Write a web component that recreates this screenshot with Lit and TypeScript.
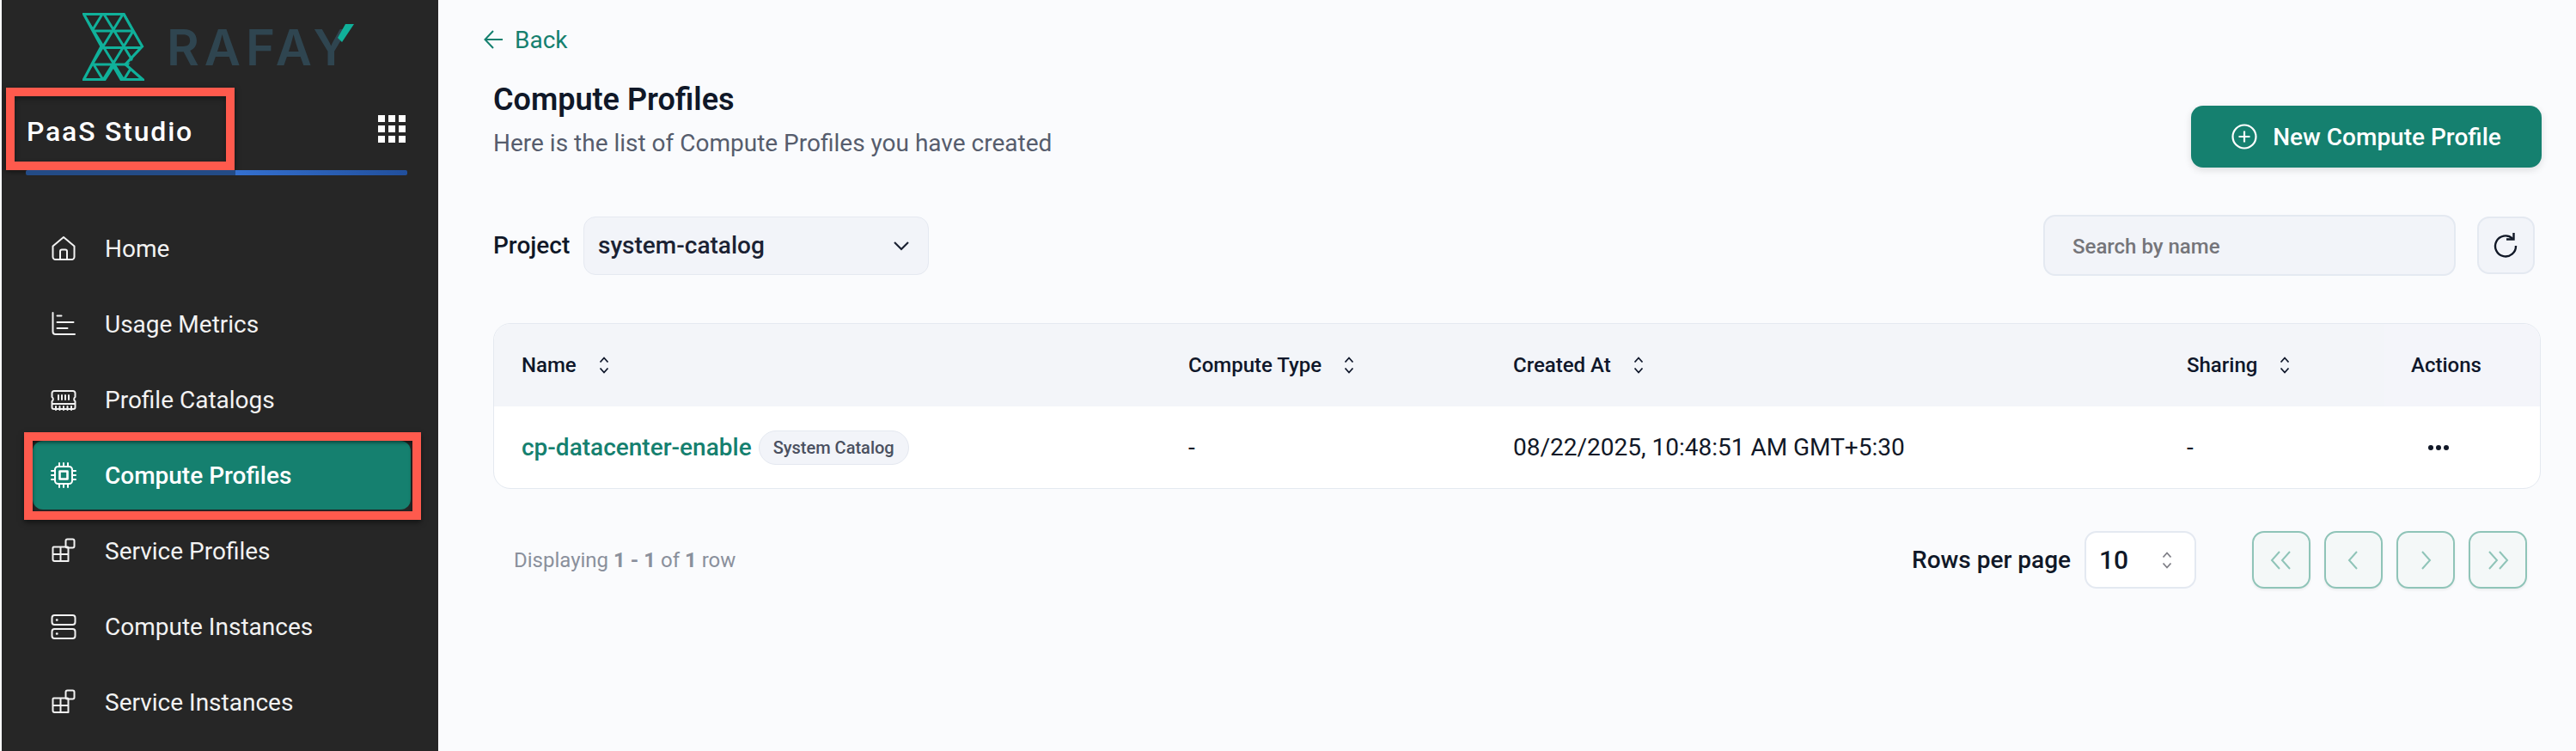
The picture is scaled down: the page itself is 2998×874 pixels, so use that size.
import { LitElement, html, css, svg } from "lit";
import { customElement } from "lit/decorators.js";

const S = 30;
const icons: Record<string, unknown> = {
  home: svg`<path d="M2.500 12.500 15 2l12.500 10.500V25a3 3 0 0 1-3 3h-19a3 3 0 0 1-3-3z"/><path d="M11 28V18.500a2 2 0 0 1 2-2h4a2 2 0 0 1 2 2V28"/>`,
  usage: svg`<path d="M2.500 2v22a3 3 0 0 0 3 3h22.500M7.500 5.500h5M7.500 13h19M7.500 20h12"/>`,
  ram: svg`<path d="M4 5h22a2.500 2.500 0 0 1 2.500 2.500v4.500a3 3 0 0 0 0 5v7a2 2 0 0 1-2 2h-23a2 2 0 0 1-2-2v-7a3 3 0 0 0 0-5V7.500A2.500 2.500 0 0 1 4 5z"/><path d="M9 10v5M13 10v5M17 10v5M21 10v5M2 20h26M6 23v4M10.500 23v4M15 23v4M19.500 23v4M24 23v4"/>`,
  chip: svg`<rect x="5" y="5" width="20" height="20" rx="3.500"/><rect x="10.500" y="10.500" width="9" height="9" stroke-width="2.600"/><path d="M10 1v4M15 1v4M20 1v4M10 25v4M15 25v4M20 25v4M1 10h4M1 15h4M1 20h4M25 10h4M25 15h4M25 20h4"/>`,
  service: svg`<path d="M3.500 10.500h16a1 1 0 0 1 1 1V27h-16a2 2 0 0 1-2-2V11.500a1 1 0 0 1 1-1zM2.500 19h18M11.500 11v16"/><rect x="17.500" y="1.500" width="10" height="10" rx="2"/>`,
  server: svg`<rect x="1.500" y="2" width="27" height="11" rx="3"/><rect x="1.500" y="18" width="27" height="11" rx="3"/><path d="M7 7.500h.5M7 23.500h.5" stroke-width="2.400"/>`,
};

const nav: [string, string][] = [
  ["home", "Home"],
  ["usage", "Usage Metrics"],
  ["ram", "Profile Catalogs"],
  ["chip", "Compute Profiles"],
  ["service", "Service Profiles"],
  ["server", "Compute Instances"],
  ["service", "Service Instances"],
];

const LW = 24;
const latticeLines = (() => {
  const d: string[] = [];
  for (let i = 0; i < 5; i++) {
    const y = i * 19.500 + 1.500;
    d.push(`M0 ${y}H72`);
  }
  for (let k = -4; k < 8; k++) {
    const x = k * LW;
    d.push(`M${x} 0l48 78`);
    d.push(`M${x + 48} 0l-48 78`);
  }
  return d.join("");
})();

const sort = svg`<svg class="sort" viewBox="0 0 12 20" fill="none" stroke="currentColor" stroke-width="1.800"><path d="M1.500 6.500 6 1.500l4.500 5M1.500 13.500 6 18.500l4.500-5"/></svg>`;

@customElement("app-root")
export class AppRoot extends LitElement {
  static styles = css`
    :host {
      display: flex;
      width: 2998px;
      height: 874px;
      overflow: hidden;
      background: #fafbfd;
      font-family: Roboto, "Liberation Sans", sans-serif;
      color: #111827;
      padding-left: 2px;
      box-sizing: border-box;
    }
    .side {
      width: 508px;
      flex: none;
      background: #262626;
      display: flex;
      flex-direction: column;
      box-sizing: border-box;
    }
    .logo {
      display: flex;
      align-items: center;
      height: 102px;
      padding: 7px 0 0 94px;
      box-sizing: border-box;
    }
    .mark { width: 72px; height: 79px; }
    .word {
      position: relative;
      margin-left: 26px;
      font: 600 58px/60px Inter, "Liberation Sans", sans-serif;
      color: #2f4550;
      letter-spacing: 6px;
      height: 60px;
    }
    .tick { position: absolute; left: 198px; top: 2px; width: 20px; height: 22px; }
    .prod {
      display: flex;
      align-items: center;
      justify-content: space-between;
      padding: 0 38px 0 5px;
    }
    .box {
      border: 10px solid #ff5a4d;
      width: 266px;
      height: 96px;
      box-sizing: border-box;
      display: flex;
      align-items: center;
      padding: 6px 0 0 14px;
      font-size: 32px;
      font-weight: 500;
      color: #fff;
      letter-spacing: 1.800px;
      box-shadow: 0 2px 6px rgba(0, 0, 0, 0.5), inset 0 3px 6px rgba(0, 0, 0, 0.35);
      white-space: nowrap;
    }
    .grid {
      display: grid;
      grid-template-columns: repeat(3, 8px);
      grid-auto-rows: 8px;
      gap: 4px;
    }
    .grid i { background: #fff; }
    .rule {
      height: 6px;
      margin: 0 36px 0 28px;
      border-radius: 2px;
      background: linear-gradient(90deg, #234b86 0 55%, #3470d0 55%, #214f9c 100%);
    }
    .nav {
      display: flex;
      flex-direction: column;
      gap: 8px;
      margin: 45px 32px 0 36px;
    }
    .item {
      position: relative;
      height: 80px;
      display: flex;
      align-items: center;
      gap: 33px;
      padding-left: 21px;
      border-radius: 12px;
      color: #f2f2f2;
      font-size: 28px;
      white-space: nowrap;
    }
    .item svg {
      width: ${S}px;
      height: ${S}px;
      flex: none;
      fill: none;
      stroke: currentColor;
      stroke-width: 2;
      stroke-linecap: round;
      stroke-linejoin: round;
    }
    .item.on {
      background: #15806f;
      color: #fff;
      font-weight: 500;
    }
    .item.on::after {
      content: "";
      position: absolute;
      inset: -10px -12px -12px -10px;
      border: 10px solid #ff5a4d;
      box-shadow: 0 3px 6px rgba(0, 0, 0, 0.5), inset 0 2px 4px rgba(0, 0, 0, 0.5);
    }
    .main {
      flex: 1;
      min-width: 0;
      padding: 26px 40px 0 64px;
      box-sizing: border-box;
    }
    .back {
      display: flex;
      align-items: center;
      gap: 12px;
      height: 40px;
      margin-left: -11px;
      color: #15806f;
      font-size: 28px;
    }
    .back svg { width: 24px; height: 24px; }
    .head {
      display: flex;
      justify-content: space-between;
      margin-top: 28px;
    }
    h1 {
      margin: 0;
      font-size: 36px;
      line-height: 44px;
      font-weight: 600;
      color: #101828;
    }
    .sub {
      margin-top: 9px;
      font-size: 28px;
      line-height: 40px;
      color: #565d6d;
    }
    .cta {
      margin-top: 29px;
      width: 408px;
      height: 72px;
      border-radius: 14px;
      background: #15806f;
      color: #fff;
      display: flex;
      align-items: center;
      justify-content: center;
      gap: 18px;
      font-size: 28px;
      font-weight: 500;
      box-shadow: 0 3px 8px rgba(0, 0, 0, 0.12);
    }
    .cta svg { width: 30px; height: 30px; }
    .tools {
      display: flex;
      align-items: center;
      margin-top: 55px;
      padding-right: 8px;
    }
    .tools label {
      font-size: 28px;
      font-weight: 500;
      width: 105px;
      color: #101828;
    }
    .sel {
      width: 402px;
      height: 68px;
      box-sizing: border-box;
      background: #f2f4f9;
      border: 1px solid #e5e9f1;
      border-radius: 14px;
      display: flex;
      align-items: center;
      justify-content: space-between;
      padding: 0 21px 0 16px;
      font-size: 28px;
      font-weight: 500;
      color: #1b2233;
    }
    .sel svg { width: 20px; height: 12px; }
    .search {
      margin-left: auto;
      width: 480px;
      height: 71px;
      box-sizing: border-box;
      background: #f2f4f9;
      border: 2px solid #e4e9f1;
      border-radius: 14px;
      display: flex;
      align-items: center;
      padding: 2px 0 0 32px;
      font-size: 24px;
      font-weight: 500;
      color: #75757a;
    }
    .refresh {
      margin-left: 25px;
      width: 67px;
      height: 67px;
      box-sizing: border-box;
      background: #f2f4f9;
      border: 2px solid #e4e9f1;
      border-radius: 14px;
      display: flex;
      align-items: center;
      justify-content: center;
      padding-right: 2px;
    }
    .refresh svg { width: 30px; height: 30px; }
    .table {
      margin-top: 55px;
      width: 2383px;
      height: 193px;
      box-sizing: border-box;
      border: 1px solid #e4e9f0;
      border-radius: 20px;
      overflow: hidden;
      background: #fff;
      display: grid;
      grid-template-columns: 776px 378px 784px 262px 181px;
      grid-template-rows: 96px 95px;
    }
    .th {
      background: #f3f5f9;
      display: flex;
      align-items: center;
      gap: 26px;
      padding-left: 32px;
      font-size: 24px;
      font-weight: 500;
      color: #0f172a;
    }
    .sort { width: 12px; height: 20px; }
    .th.act { padding-left: 31px; background: #f4f5fa; }
    .td {
      display: flex;
      align-items: center;
      padding-left: 32px;
      font-size: 28px;
      color: #111827;
      white-space: nowrap;
    }
    .td.act { padding-left: 51px; }
    .link { color: #15806f; font-weight: 500; }
    .badge {
      margin-left: 8px;
      height: 40px;
      box-sizing: border-box;
      border: 1px solid #e4e8f0;
      background: #f2f4f9;
      border-radius: 20px;
      padding: 0 16px;
      display: flex;
      align-items: center;
      font-size: 20px;
      font-weight: 500;
      color: #4a5060;
    }
    .dots { display: flex; gap: 3px; }
    .dots i { width: 6px; height: 6px; border-radius: 50%; background: #111827; }
    .foot {
      display: flex;
      align-items: center;
      margin-top: 49px;
      padding: 0 17px 0 24px;
      height: 67px;
    }
    .count { font-size: 24px; color: #8a909c; }
    .count b { font-weight: 700; }
    .rpp {
      margin-left: auto;
      font-size: 28px;
      font-weight: 500;
      color: #101828;
    }
    .size {
      margin-left: 16px;
      width: 130px;
      height: 67px;
      box-sizing: border-box;
      border: 2px solid #e4e9f1;
      border-radius: 14px;
      background: #fff;
      display: flex;
      align-items: center;
      justify-content: space-between;
      padding: 0 26px 0 15px;
      font-size: 30px;
      font-weight: 500;
      color: #101828;
    }
    .size .sort { color: #7e7e86; }
    .pages { display: flex; gap: 16px; margin-left: 65px; }
    .pg {
      width: 68px;
      height: 67px;
      box-sizing: border-box;
      border: 2px solid #8fc4b8;
      border-radius: 14px;
      background: #f4f8f8;
      color: #8fc4b8;
      display: flex;
      align-items: center;
      justify-content: center;
      box-shadow: 0 2px 3px rgba(0, 0, 0, 0.06);
    }
    .pg svg { width: 30px; height: 24px; fill: none; stroke: currentColor; stroke-width: 2; }
  `;

  render() {
    return html`
      <aside class="side">
        <div class="logo">
          <svg class="mark" viewBox="0 0 72 79">
            <defs>
              <clipPath id="lc2"><path d="M0 0H49L70 39 52 63 71 78H44L36 63 27 78H0L21 39z" /></clipPath>
            </defs>
            <path d="M1.500 1.500H48L69.500 39 50 60 70 77.500H45L36 62 26 77.500H1.500L22 39z" fill="none" stroke="#10b09a" stroke-width="3.200" stroke-linejoin="miter" />
            <path clip-path="url(#lc2)" d="${latticeLines}" fill="none" stroke="#10b09a" stroke-width="3" />
          </svg>
          <div class="word">RAFAY<svg class="tick" viewBox="0 0 20 22"><path d="M1 17 10 1h10L6 22z" fill="#10b09a" /></svg></div>
        </div>
        <div class="prod">
          <div class="box">PaaS Studio</div>
          <div class="grid">${Array.from({ length: 9 }, () => html`<i></i>`)}</div>
        </div>
        <div class="rule"></div>
        <nav class="nav">
          ${nav.map(
            ([ic, label]) => html`<div class="item ${label === "Compute Profiles" ? "on" : ""}">
              <svg viewBox="0 0 ${S} ${S}">${icons[ic]}</svg><span>${label}</span>
            </div>`
          )}
        </nav>
      </aside>
      <main class="main">
        <div class="back">
          <svg viewBox="0 0 24 24" fill="none" stroke="currentColor" stroke-width="2"><path d="M22 12H2M11 2 1.500 12 11 22" /></svg>
          <span>Back</span>
        </div>
        <div class="head">
          <div>
            <h1>Compute Profiles</h1>
            <div class="sub">Here is the list of Compute Profiles you have created</div>
          </div>
          <div class="cta">
            <svg viewBox="0 0 30 30" fill="none" stroke="currentColor" stroke-width="2.200"><circle cx="15" cy="15" r="13.500" /><path d="M15 8.500v13M8.500 15h13" /></svg>
            <span>New Compute Profile</span>
          </div>
        </div>
        <div class="tools">
          <label>Project</label>
          <div class="sel">
            <span>system-catalog</span>
            <svg viewBox="0 0 20 12" fill="none" stroke="#1b2233" stroke-width="2.200"><path d="M2 2l8 8 8-8" /></svg>
          </div>
          <div class="search">Search by name</div>
          <div class="refresh">
            <svg viewBox="0 0 30 30" fill="none" stroke="#111827" stroke-width="2.400"><path d="M23 6.500A12 12 0 1 0 27 15" /><path d="M16 7.500h8.500V0" /></svg>
          </div>
        </div>
        <div class="table">
          <div class="th">Name ${sort}</div>
          <div class="th">Compute Type ${sort}</div>
          <div class="th">Created At ${sort}</div>
          <div class="th">Sharing ${sort}</div>
          <div class="th act">Actions</div>
          <div class="td"><span class="link">cp-datacenter-enable</span><span class="badge">System Catalog</span></div>
          <div class="td">-</div>
          <div class="td">08/22/2025, 10:48:51 AM GMT+5:30</div>
          <div class="td">-</div>
          <div class="td act"><span class="dots"><i></i><i></i><i></i></span></div>
        </div>
        <div class="foot">
          <div class="count">Displaying <b>1 - 1</b> of <b>1</b> row</div>
          <div class="rpp">Rows per page</div>
          <div class="size"><span>10</span>${sort}</div>
          <div class="pages">
            <div class="pg"><svg viewBox="0 0 30 24"><path d="M13 2 4 12l9 10M25 2l-9 10 9 10" /></svg></div>
            <div class="pg"><svg viewBox="0 0 30 24"><path d="M19 2l-9 10 9 10" /></svg></div>
            <div class="pg"><svg viewBox="0 0 30 24"><path d="M11 2l9 10-9 10" /></svg></div>
            <div class="pg"><svg viewBox="0 0 30 24"><path d="M5 2l9 10-9 10M17 2l9 10-9 10" /></svg></div>
          </div>
        </div>
      </main>
    `;
  }
}
